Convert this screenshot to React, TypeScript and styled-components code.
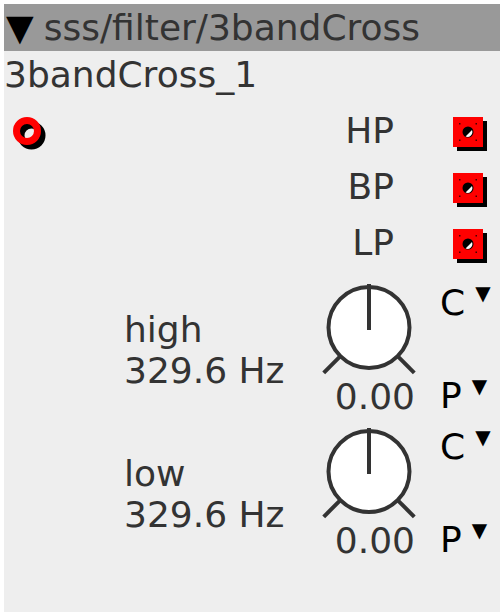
import styled, { createGlobalStyle } from 'styled-components';

const GlobalStyle = createGlobalStyle`
  html, body {
    margin: 0;
    padding: 0;
    background: #fff;
  }
  body {
    font-family: "DejaVu Sans", "Liberation Sans", sans-serif;
  }
`;

const Panel = styled.div`
  margin: 4px;
  width: 496px;
  height: 608px;
  background: #eeeeee;
  color: #333;
  font-size: 36px;
  overflow: hidden;
`;

const Header = styled.div`
  height: 47px;
  line-height: 47px;
  background: #999999;
  padding-left: 2px;
  white-space: nowrap;
`;

const Caret = styled.span`
  color: #000;
  margin-right: 10px;
`;

const Title = styled.div`
  height: 48px;
  line-height: 48px;
  white-space: nowrap;
`;

const Ports = styled.div`
  display: flex;
  justify-content: space-between;
  padding: 4px 13px 0 8px;
  height: 168px;
`;

const InputJack = styled.svg`
  margin-top: 13px;
`;

const Outputs = styled.div`
  display: flex;
  flex-direction: column;
`;

const OutputRow = styled.div`
  display: grid;
  grid-template-columns: auto 34px;
  column-gap: 59px;
  height: 56px;
  line-height: 56px;
  justify-items: end;
`;

const JackBox = styled.svg`
  margin-top: 14px;
`;

const KnobRow = styled.div`
  display: grid;
  grid-template-columns: 197px 96px 59px;
  padding-left: 120px;
  height: 144px;
`;

const Label = styled.div`
  padding-top: 38px;
  line-height: 41px;
  white-space: nowrap;
`;

const KnobCol = styled.div`
  display: flex;
  flex-direction: column;
  padding-top: 10px;
`;

const Value = styled.div`
  line-height: 41px;
  text-align: right;
  padding-right: 2px;
  white-space: nowrap;
`;

const Modes = styled.div`
  display: flex;
  flex-direction: column;
  gap: 52px;
  padding: 11px 0 0 23px;
  color: #000;
  line-height: 41px;
`;

const Mode = styled.div`
  height: 41px;
  white-space: nowrap;
`;

const SmallCaret = styled.span`
  font-size: 20px;
  line-height: 0;
  margin-left: 10px;
  vertical-align: 15px;
`;

function RoundJack() {
  return (
    <InputJack width="36" height="36" viewBox="0 0 36 36">
      <circle cx="19.5" cy="19.5" r="10.5" fill="none" stroke="#000" strokeWidth="7" />
      <circle cx="15" cy="15" r="10.5" fill="none" stroke="#ff0000" strokeWidth="7" />
    </InputJack>
  );
}

function SquareJack() {
  return (
    <JackBox width="34" height="34" viewBox="0 0 34 34">
      <rect x="4" y="4" width="30" height="30" fill="#000" />
      <rect x="0" y="0" width="30" height="30" fill="#ff0000" />
      <circle cx="15" cy="15" r="5.5" fill="#000" />
      <path d="M19 13 L12.5 19.5 A5 5 0 0 0 19 13 Z" fill="#fff" />
      <rect x="6" y="6" width="1.5" height="1.5" fill="#400" />
      <rect x="22.5" y="6" width="1.5" height="1.5" fill="#400" />
      <rect x="6" y="22.5" width="1.5" height="1.5" fill="#400" />
      <rect x="22.5" y="22.5" width="1.5" height="1.5" fill="#400" />
    </JackBox>
  );
}

function Knob() {
  return (
    <svg width="96" height="95" viewBox="0 0 96 95">
      <g stroke="#333" strokeWidth="4" fill="none">
        <line x1="19.4" y1="75.1" x2="2.7" y2="91.8" />
        <line x1="76.6" y1="75.1" x2="93.3" y2="91.8" />
      </g>
      <circle cx="48" cy="46.5" r="40.5" fill="#fff" stroke="#333" strokeWidth="4" />
      <line x1="48" y1="3" x2="48" y2="49" stroke="#333" strokeWidth="4" />
    </svg>
  );
}

const knobs = [
  { name: 'high', freq: '329.6 Hz', value: '0.00' },
  { name: 'low', freq: '329.6 Hz', value: '0.00' },
];

export default function App() {
  return (
    <>
      <GlobalStyle />
      <Panel>
        <Header>
          <Caret>▼</Caret>sss/filter/3bandCross
        </Header>
        <Title>3bandCross_1</Title>
        <Ports>
          <RoundJack />
          <Outputs>
            {['HP', 'BP', 'LP'].map(p => (
              <OutputRow key={p}>
                <span>{p}</span>
                <SquareJack />
              </OutputRow>
            ))}
          </Outputs>
        </Ports>
        {knobs.map(k => (
          <KnobRow key={k.name}>
            <Label>
              {k.name}
              <br />
              {k.freq}
            </Label>
            <KnobCol>
              <Knob />
              <Value>{k.value}</Value>
            </KnobCol>
            <Modes>
              <Mode>
                C<SmallCaret>▼</SmallCaret>
              </Mode>
              <Mode>
                P<SmallCaret>▼</SmallCaret>
              </Mode>
            </Modes>
          </KnobRow>
        ))}
      </Panel>
    </>
  );
}
